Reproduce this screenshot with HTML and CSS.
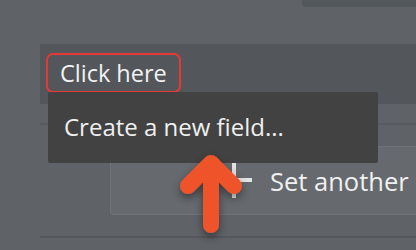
FILE: index.html
```html
<!DOCTYPE html>
<html>
<head>
<meta charset="utf-8">
<link rel="stylesheet" href="styles.css">
</head>
<body>
<div class="topbar"></div>
<div class="panel">
  <div class="click">Click here</div>
</div>
<div class="section">
  <div class="divider"></div>
  <div class="set-row">
    <div class="set-btn">
      <svg class="plus" width="20" height="36" viewBox="0 0 20 36"><rect x="0" y="0" width="4" height="36" fill="#e4e4e4"/><rect x="0" y="16" width="20" height="4" fill="#e4e4e4"/></svg>
      <span class="set-label">Set another</span>
    </div>
  </div>
  <div class="bottom-line"></div>
</div>
<div class="menu">
  <div class="menu-item">Create a new field...</div>
</div>
<svg class="arrow" width="90" height="110" viewBox="0 0 90 110">
  <defs>
    <filter id="sh" x="-50%" y="-50%" width="200%" height="200%">
      <feDropShadow dx="0" dy="4" stdDeviation="5" flood-color="#000" flood-opacity="0.45"/>
    </filter>
  </defs>
  <g filter="url(#sh)" stroke="#ef532c" stroke-width="16" stroke-linecap="round" stroke-linejoin="round" fill="none">
    <path d="M45 77 L45 16"/>
    <path d="M22 38 L45 15 L68 38"/>
  </g>
</svg>
</body>
</html>
```
FILE: styles.css
```css
html, body {
  margin: 0;
  padding: 0;
}
body {
  width: 416px;
  height: 250px;
  overflow: hidden;
  background: #5f6367;
  font-family: "Open Sans", "Noto Sans", sans-serif;
  position: relative;
}
.topbar {
  height: 7px;
  margin-left: 302px;
  background: #53585c;
  border-bottom-left-radius: 4px;
}
.panel {
  margin-top: 37px;
  margin-left: 40px;
  height: 60px;
  background: #53575b;
  padding: 9px 0 0 6px;
  box-sizing: border-box;
}
.click {
  width: 135px;
  height: 40px;
  box-sizing: border-box;
  border: 2px solid #e53935;
  border-radius: 7px;
  color: #f2f2f2;
  font-size: 23.5px;
  line-height: 36px;
  padding-left: 12px;
  white-space: nowrap;
}
.section {
  margin-left: 40px;
  padding-top: 19px;
}
.divider {
  height: 2px;
  background: #585c60;
}
.set-row {
  padding-top: 21px;
  padding-left: 70px;
}
.set-btn {
  height: 69px;
  box-sizing: border-box;
  border: 1px solid #6f7377;
  border-right: none;
  border-radius: 4px 0 0 4px;
  background: #666a6e;
  display: flex;
  align-items: center;
  padding-left: 121px;
}
.plus {
  margin-top: -2px;
}
.set-label {
  margin-left: 18px;
  color: #f0f0f0;
  font-size: 25.5px;
  white-space: nowrap;
}
.bottom-line {
  margin-top: 21px;
  height: 2px;
  background: #54585c;
}
.menu {
  position: absolute;
  left: 48px;
  top: 92px;
  width: 330px;
  height: 71px;
  background: #424242;
  border-radius: 2px;
  box-sizing: border-box;
  padding-left: 16px;
  display: flex;
  align-items: center;
}
.menu-item {
  color: #f0f0f0;
  font-size: 24px;
  margin-top: -2px;
}
.arrow {
  position: absolute;
  left: 166px;
  top: 148px;
}
```
